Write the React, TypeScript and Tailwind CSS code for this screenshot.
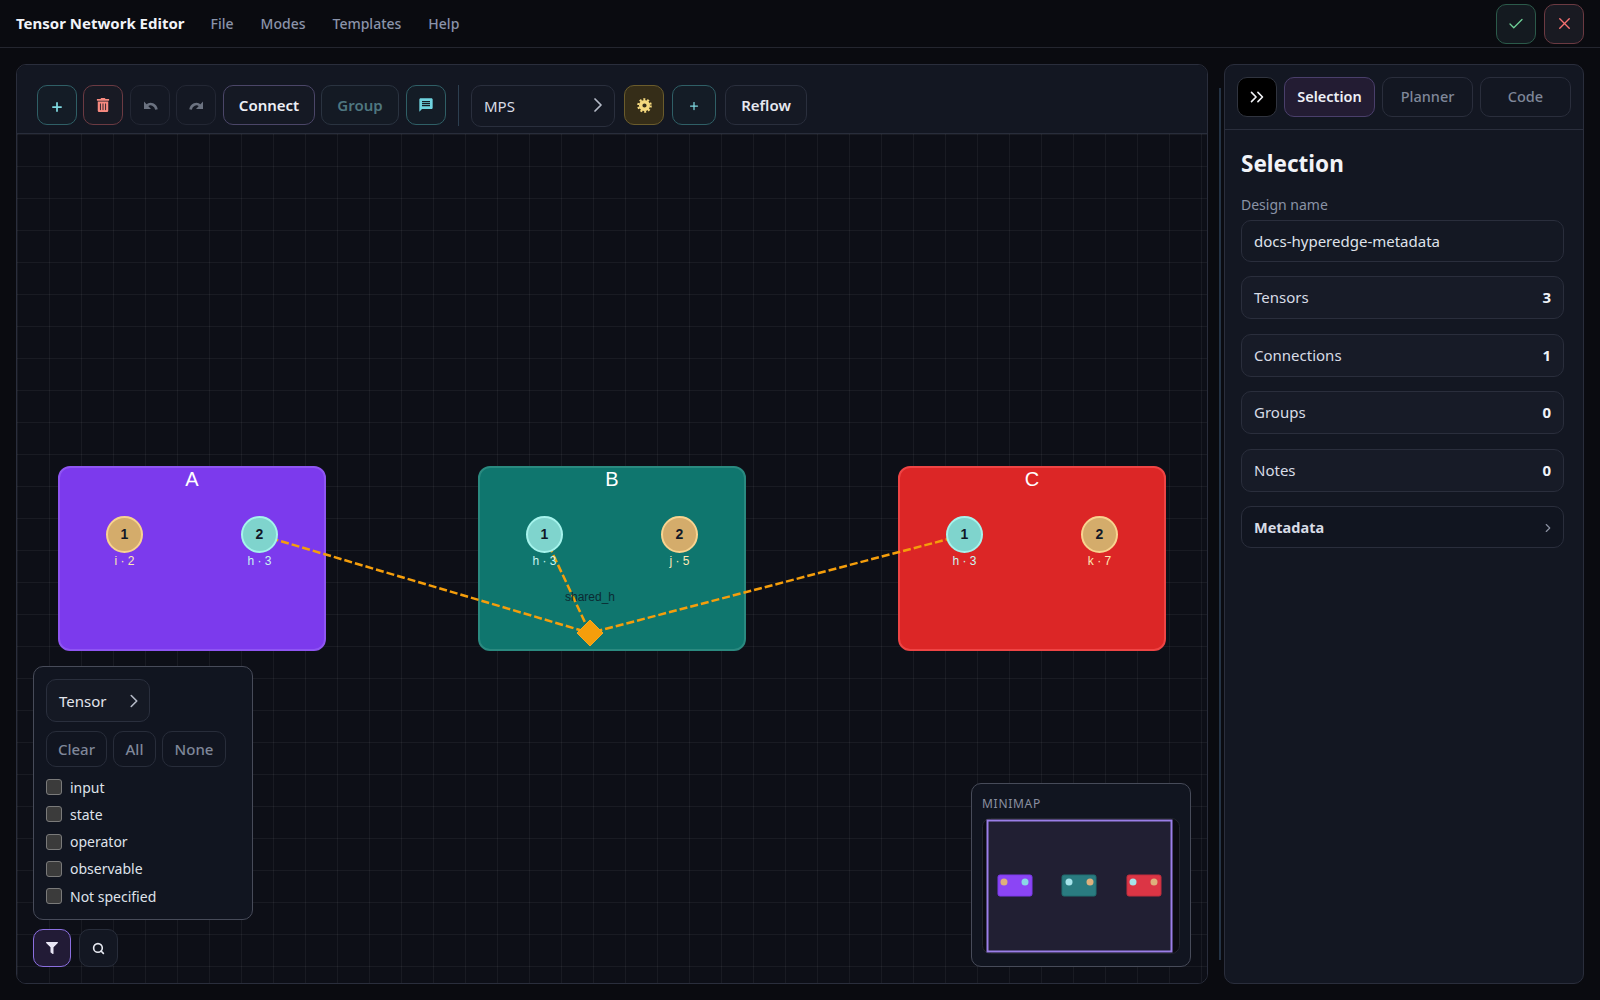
// App.tsx
import { Check, X, ChevronRight, ChevronsRight, Search, Plus } from 'lucide-react'
import { FaTrashAlt, FaFilter } from 'react-icons/fa'
import { MdMessage } from 'react-icons/md'

const NAV = ['File', 'Modes', 'Templates', 'Help']
const STATS = [
  { label: 'Tensors', value: 3 },
  { label: 'Connections', value: 1 },
  { label: 'Groups', value: 0 },
  { label: 'Notes', value: 0 },
]
const FILTER_TYPES = ['input', 'state', 'operator', 'observable', 'Not specified']

const TEAL = { dot: 'bg-[#7fd4cd] border-[#a5f3ec]', text: 'text-[#c9f5f1]' }
const SAND = { dot: 'bg-[#d4ac6b] border-[#f8d38f]', text: 'text-[#fde8b4]' }

const NODES = [
  {
    name: 'A', left: 'left-[41px]', bg: 'bg-[#7c3aed] border-[#8f55f3]',
    ports: [{ n: 1, label: 'i · 2', tone: SAND }, { n: 2, label: 'h · 3', tone: TEAL }],
  },
  {
    name: 'B', left: 'left-[461px]', bg: 'bg-[#0f766e] border-[#2a8a80]',
    ports: [{ n: 1, label: 'h · 3', tone: TEAL }, { n: 2, label: 'j · 5', tone: SAND }],
  },
  {
    name: 'C', left: 'left-[881px]', bg: 'bg-[#dc2626] border-[#ef4444]',
    ports: [{ n: 1, label: 'h · 3', tone: TEAL }, { n: 2, label: 'k · 7', tone: SAND }],
  },
]

function IconButton({ className, children }: { className: string; children: React.ReactNode }) {
  return (
    <button className={`w-10 h-10 shrink-0 rounded-[10px] border flex items-center justify-center ${className}`}>
      {children}
    </button>
  )
}

function GearIcon() {
  return (
    <svg width={15} height={15} viewBox="0 0 15 15">
      <circle cx={7.5} cy={7.5} r={6.2} fill="none" stroke="#f5d97e" strokeWidth={2.2} strokeDasharray="2 1.9" />
      <circle cx={7.5} cy={7.5} r={3.8} fill="none" stroke="#f5d97e" strokeWidth={3.4} />
    </svg>
  )
}

// heavy curved arrow, the redo button uses it mirrored
function UndoIcon({ flip }: { flip?: boolean }) {
  return (
    <svg width={15} height={10} viewBox="0 0 15 10" className={flip ? '-scale-x-100' : ''}>
      <path d="M13.5 9.5 C12.5 4.5 7.5 2.5 4 5.5" fill="none" stroke="currentColor" strokeWidth={2.6} />
      <polygon points="1,1.5 1,9 8,9" fill="currentColor" />
    </svg>
  )
}

function Toolbar() {
  return (
    <div className="h-[69px] shrink-0 flex items-start pl-5 pt-5 border-b border-[#282d3b] bg-[#131722]">
      <IconButton className="border-[#2f5f66] bg-[#141c26] text-[#7fd8e0] mr-[6px]">
        <Plus size={14} strokeWidth={3} className="mt-[3px]" />
      </IconButton>
      <IconButton className="border-[#6b3a42] bg-[#181a24] text-[#f88a80] mr-[7px]">
        <FaTrashAlt size={14} />
      </IconButton>
      <IconButton className="border-[#232734] bg-[#141823] text-[#6b7280] mr-[6px]">
        <UndoIcon />
      </IconButton>
      <IconButton className="border-[#232734] bg-[#141823] text-[#6b7280] mr-[7px]">
        <UndoIcon flip />
      </IconButton>
      <button className="w-[92px] h-10 rounded-[10px] border border-[#4b4668] bg-[#151924] text-[15px] font-semibold text-[#eef0f6] mr-[6px]">
        Connect
      </button>
      <button className="w-[78px] h-10 rounded-[10px] border border-[#2a3340] bg-[#141a24] text-[15px] font-semibold text-[#4f7780] mr-[7px]">
        Group
      </button>
      <IconButton className="border-[#2f5f66] bg-[#141c26] text-[#6fd3df]">
        <MdMessage size={16} />
      </IconButton>
      <div className="w-px h-[41px] bg-[#2d3f50] ml-3 mr-3" />
      <button className="w-[144px] h-[42px] rounded-[10px] border border-[#2a2f3d] bg-[#141823] flex items-center justify-between pl-3 pr-1 text-[15px] text-[#d8dce6] mr-[9px]">
        <span className="mt-[1px]">MPS</span>
        <ChevronRight size={24} strokeWidth={1.75} className="text-[#b4b9c6] -mt-[2px]" />
      </button>
      <IconButton className="border-[#6b5c2c] bg-[#352d18] mr-2">
        <GearIcon />
      </IconButton>
      <button className="w-11 h-10 rounded-[10px] border border-[#2f5f66] bg-[#141c26] text-[#7fd8e0] flex items-center justify-center mr-[9px]">
        <Plus size={12} strokeWidth={2.5} className="mt-[1px]" />
      </button>
      <button className="w-[82px] h-10 rounded-[10px] border border-[#2a2f3d] bg-[#151924] text-[15px] font-semibold text-[#e6e8f0]">
        Reflow
      </button>
    </div>
  )
}

function EdgeLayer() {
  return (
    <svg className="absolute inset-0 w-full h-full pointer-events-none" fill="none">
      <g stroke="#f59e0b" strokeWidth={2.5} strokeDasharray="8 3">
        <line x1={243} y1={401} x2={573} y2={499} />
        <line x1={527} y1={401} x2={573} y2={499} />
        <line x1={947} y1={401} x2={573} y2={499} />
      </g>
      <polygon points="573,486 586,499 573,512 560,499" fill="#f59e0b" stroke="#f7a91f" />
      <text x={573} y={467} textAnchor="middle" fontSize={12} fontFamily="'Liberation Sans', sans-serif" fill="#0b2b33">
        shared_h
      </text>
    </svg>
  )
}

function TensorNode({ node }: { node: (typeof NODES)[number] }) {
  return (
    <div className={`absolute top-[332px] w-[268px] h-[185px] rounded-xl border-2 ${node.left} ${node.bg}`}>
      <div className="text-center text-[20px] leading-none mt-[1px] text-white font-['Liberation_Sans',sans-serif]">{node.name}</div>
    </div>
  )
}

function PortLayer({ node }: { node: (typeof NODES)[number] }) {
  return (
    <div className={`absolute top-[332px] w-[268px] h-[185px] font-['Liberation_Sans',sans-serif] ${node.left}`}>
      {node.ports.map((p, i) => (
        <div
          key={p.n}
          className={`absolute top-[50px] w-[37px] flex flex-col items-center ${i === 0 ? 'left-[48px]' : 'left-[183px]'}`}
        >
          <div className={`w-[37px] h-[37px] shrink-0 rounded-full border-[2px] flex items-center justify-center text-[14px] font-bold text-[#111827] ${p.tone.dot}`}>
            {p.n}
          </div>
          <div className={`text-[12px] leading-[16px] whitespace-nowrap ${p.tone.text}`}>{p.label}</div>
        </div>
      ))}
    </div>
  )
}

function FilterPanel() {
  return (
    <div className="absolute left-4 bottom-4 flex flex-col gap-[9px]">
      <div className="w-[220px] h-[254px] rounded-[10px] border border-[#474b59] bg-[#111520] p-3 flex flex-col">
        <button className="w-[104px] h-[43px] rounded-[10px] border border-[#2a2f3d] bg-[#151924] flex items-center justify-between pl-3 pr-1 text-[15px] text-[#e2e5ec]">
          <span className="mt-[2px]">Tensor</span>
          <ChevronRight size={22} strokeWidth={1.75} className="text-[#b4b9c6]" />
        </button>
        <div className="flex gap-[6px] mt-[9px] mb-3">
          <button className="w-[61px] h-9 rounded-[10px] border border-[#282d3a] text-[15px] font-medium text-[#7f8799]">Clear</button>
          <button className="w-[43px] h-9 rounded-[10px] border border-[#282d3a] text-[15px] font-medium text-[#7f8799]">All</button>
          <button className="w-16 h-9 rounded-[10px] border border-[#282d3a] text-[15px] font-medium text-[#7f8799]">None</button>
        </div>
        <div className="flex flex-col gap-[11.25px]">
          {FILTER_TYPES.map(t => (
            <label key={t} className="h-4 flex items-center gap-2 text-[14px] text-[#dfe2ea]">
              <span className="w-4 h-4 rounded-[3px] border border-[#7a7a7a] bg-[#3b3b3b]" />
              {t}
            </label>
          ))}
        </div>
      </div>
      <div className="flex gap-2">
        <button className="w-[38px] h-[38px] rounded-[10px] border border-[#8b6fe0] bg-[#221b36] flex items-center justify-center text-[#e9e6f5]">
          <FaFilter size={12} />
        </button>
        <button className="w-[39px] h-[38px] rounded-[10px] border border-[#282d3a] bg-[#131722] flex items-center justify-center text-[#e6e8f0]">
          <Search size={13} strokeWidth={3} />
        </button>
      </div>
    </div>
  )
}

function Minimap() {
  return (
    <div className="absolute right-4 bottom-4 w-[220px] h-[184px] rounded-[10px] border border-[#474b59] bg-[#111520] pl-[10px] pt-3">
      <div className="text-[12px] leading-[16px] tracking-[0.06em] text-[#8a90a0]">MINIMAP</div>
      <svg width={198} height={136} viewBox="0 0 198 136" className="mt-[6px]">
        <rect x={0.5} y={0.5} width={197} height={135} rx={8} fill="#0b0c11" stroke="#23262f" />
        <rect x={5.5} y={2.5} width={184} height={131} fill="#211f33" stroke="#9b7fe8" strokeWidth={2} />
        <rect x={16} y={57} width={34} height={21} rx={2} fill="#8b45f5" stroke="#7c3aed" />
        <circle cx={22} cy={64} r={3.5} fill="#deb07c" />
        <circle cx={43} cy={64} r={3.5} fill="#8ad7e6" />
        <rect x={80} y={57} width={34} height={21} rx={2} fill="#2a7b80" stroke="#1f6f70" />
        <circle cx={87} cy={64} r={3.5} fill="#a5e3ea" />
        <circle cx={108} cy={64} r={3.5} fill="#deb07c" />
        <rect x={145} y={57} width={34} height={21} rx={2} fill="#dc3545" stroke="#c22f3e" />
        <circle cx={151} cy={64} r={3.5} fill="#a5e3ea" />
        <circle cx={172} cy={64} r={3.5} fill="#deb07c" />
      </svg>
    </div>
  )
}

function Canvas() {
  return (
    <div className="relative flex-1 min-h-0 overflow-hidden bg-[#0d0f17] bg-[linear-gradient(rgba(255,255,255,0.05)_1px,transparent_1px),linear-gradient(90deg,rgba(255,255,255,0.05)_1px,transparent_1px)] bg-[size:32px_32px]">
      {NODES.map(n => <TensorNode key={n.name} node={n} />)}
      <EdgeLayer />
      {NODES.map(n => <PortLayer key={n.name} node={n} />)}
      <FilterPanel />
      <Minimap />
    </div>
  )
}

function SidePanel() {
  return (
    <aside className="w-[360px] shrink-0 rounded-[10px] border border-[#2a2e3c] bg-[#131722] flex flex-col overflow-hidden">
      <div className="h-[65px] shrink-0 border-b border-[#2a2e3c] flex items-start gap-[7px] pt-3 pl-3">
        <button className="w-10 h-10 rounded-[10px] border border-[#30343f] bg-black flex items-center justify-center text-[#f1f2f6]">
          <ChevronsRight size={22} strokeWidth={1.75} />
        </button>
        <button className="w-[91px] h-10 rounded-[10px] border border-[#4a3f6b] bg-[#231c33] text-[14.5px] font-semibold text-[#eef0f6]">Selection</button>
        <button className="w-[91px] h-10 rounded-[10px] border border-[#2a2e3c] bg-[#131722] text-[14.5px] font-medium text-[#7f8799]">Planner</button>
        <button className="w-[91px] h-10 rounded-[10px] border border-[#2a2e3c] bg-[#131722] text-[14.5px] font-medium text-[#7f8799]">Code</button>
      </div>
      <div className="pl-4 pr-[19px] pt-[18px]">
        <h2 className="text-[22.5px] leading-[32px] font-bold text-[#f1f3f8]">Selection</h2>
        <div className="mt-[15px] text-[14px] leading-[20px] text-[#8a93a6]">Design name</div>
        <div className="mt-[5px] h-[42px] rounded-[10px] border border-[#2a2e3c] bg-[#141823] flex items-center px-3 text-[15px] text-[#dfe2ea]">
          docs-hyperedge-metadata
        </div>
        <div className="mt-[14px] flex flex-col gap-[14.6px]">
          {STATS.map(s => (
            <div key={s.label} className="h-[43px] rounded-[10px] border border-[#2a2e3c] bg-[#171b27] flex items-center justify-between px-3 text-[15px] text-[#d8dce6]">
              {s.label}
              <span className="font-bold text-[#f1f3f8]">{s.value}</span>
            </div>
          ))}
          <div className="h-[42px] rounded-[10px] border border-[#2a2e3c] bg-[#111520] flex items-center justify-between pl-3 pr-2 text-[14.5px] font-bold text-[#d8dce6]">
            Metadata
            <ChevronRight size={14} className="text-[#8a90a0] mt-[2px]" />
          </div>
        </div>
      </div>
    </aside>
  )
}

export default function App() {
  return (
    <div className="w-[1600px] h-[1000px] flex flex-col overflow-hidden bg-[#0a0b10] font-['Noto_Sans',sans-serif]">
      <header className="h-[48px] shrink-0 flex items-center justify-between pl-4 pr-4 border-b border-[#24262f] bg-[#0a0b10]">
        <div className="flex items-center">
          <span className="text-[15px] font-bold text-[#f1f3f8] mr-[26px]">Tensor Network Editor</span>
          <nav className="flex gap-[27px]">
            {NAV.map(n => (
              <span key={n} className="text-[14px] font-medium text-[#8a93aa]">{n}</span>
            ))}
          </nav>
        </div>
        <div className="flex gap-2">
          <IconButton className="border-[#2b5a4a] bg-[#141a20] text-[#6fcf97]">
            <Check size={18} strokeWidth={1.75} />
          </IconButton>
          <IconButton className="border-[#6b3a42] bg-[#191a22] text-[#f87171]">
            <X size={19} strokeWidth={1.75} />
          </IconButton>
        </div>
      </header>
      <main className="flex-1 min-h-0 flex pt-4 pl-4 pr-4 pb-[16px]">
        <section className="w-[1192px] shrink-0 rounded-[10px] border border-[#2a2e3c] flex flex-col overflow-hidden">
          <Toolbar />
          <Canvas />
        </section>
        <div className="w-[16px] shrink-0 flex justify-end pr-[3px] pt-6 pb-6">
          <div className="w-[2px] bg-[#243345]" />
        </div>
        <SidePanel />
      </main>
    </div>
  )
}
